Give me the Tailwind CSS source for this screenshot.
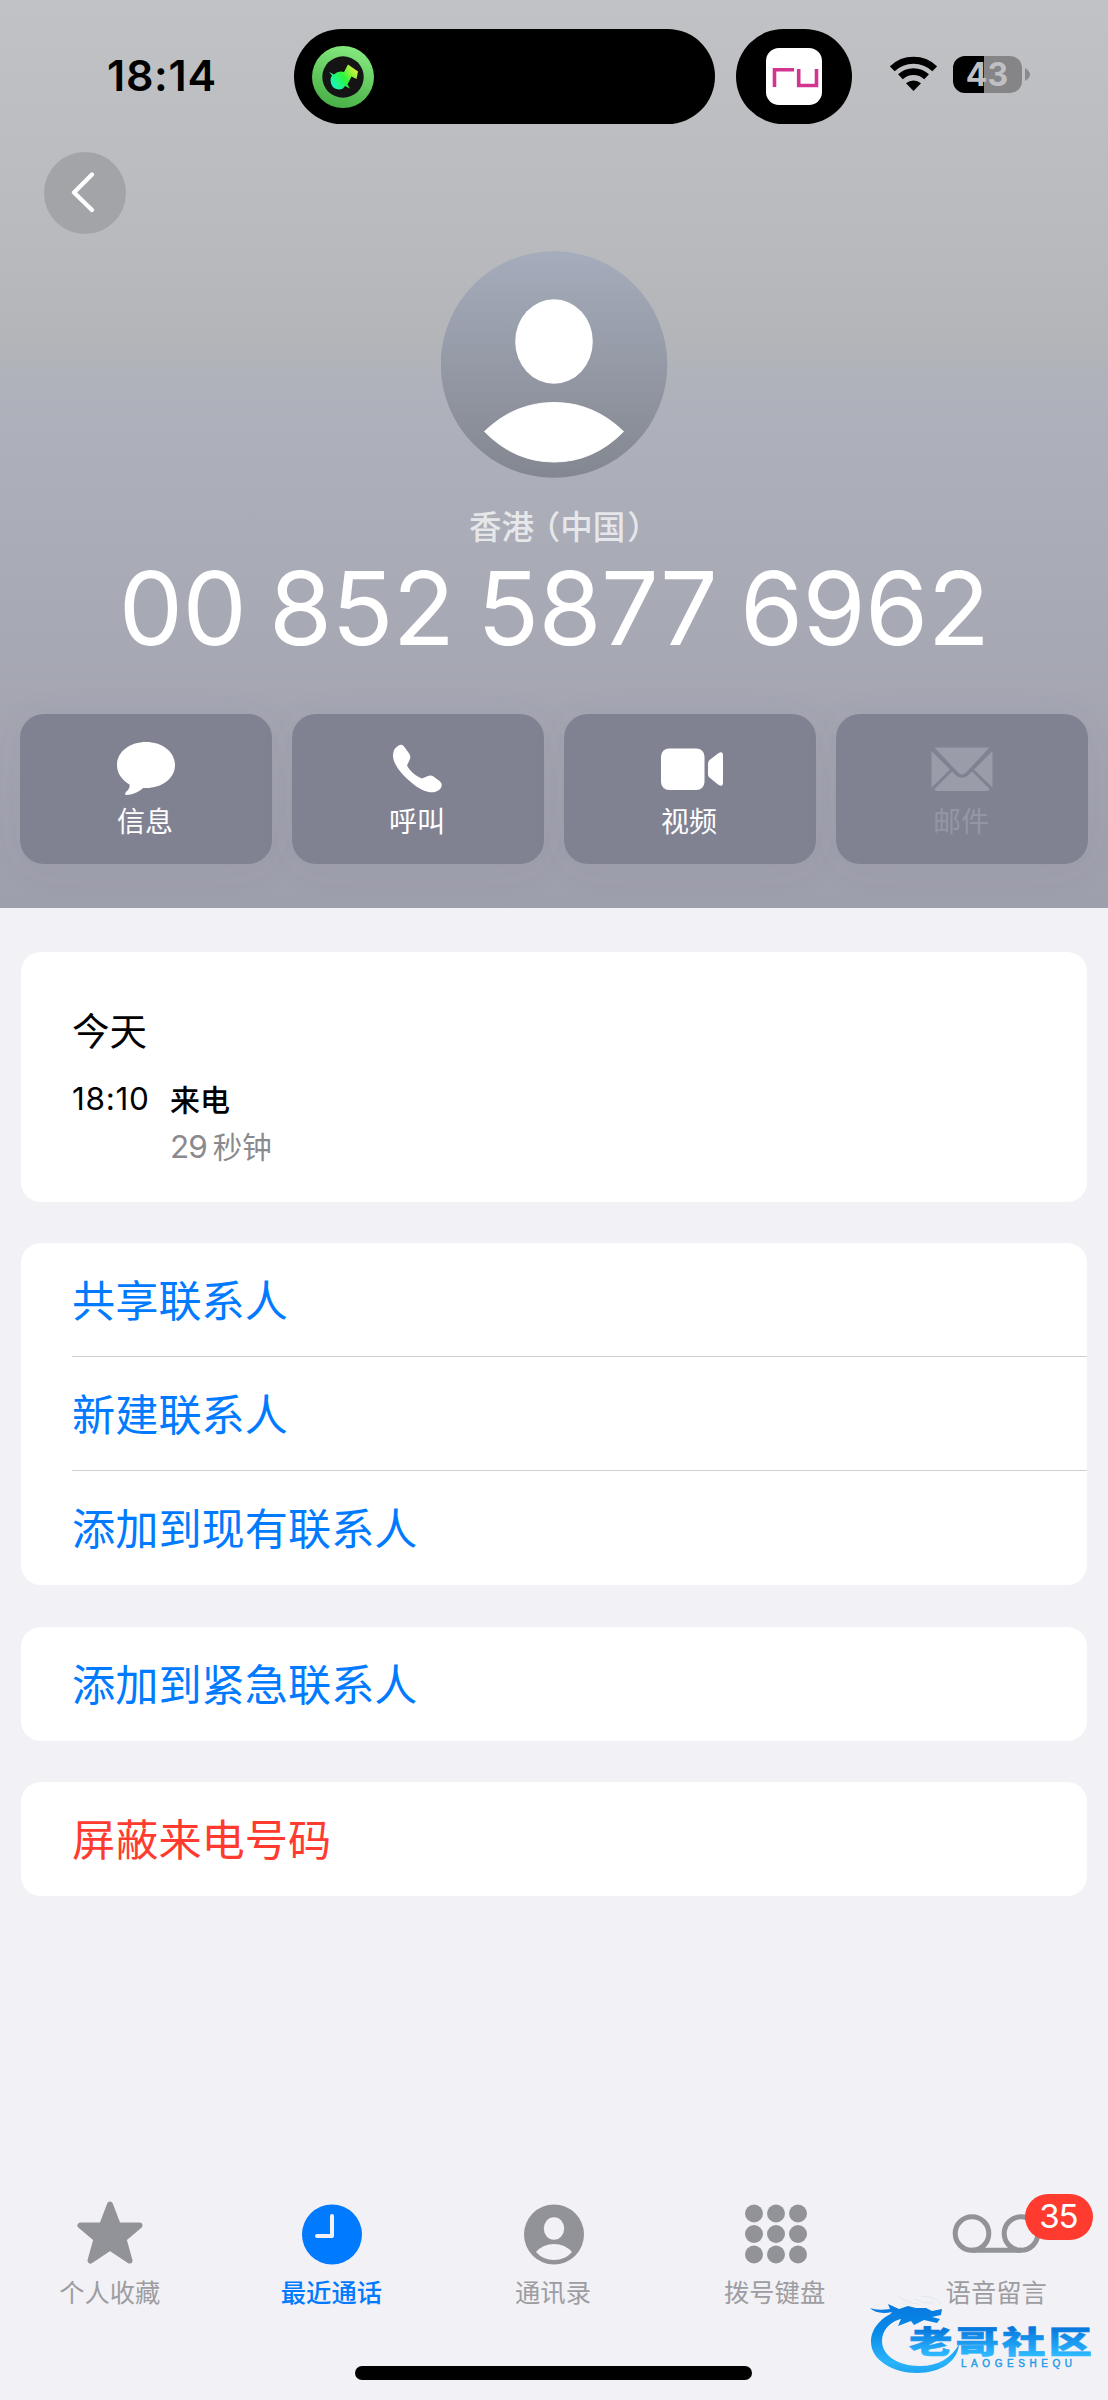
<!DOCTYPE html>
<html lang="zh-CN">
<head>
<meta charset="utf-8">
<title>通话详情</title>
<script src="https://cdn.jsdelivr.net/npm/@tailwindcss/browser@4"></script>
</head>
<body class="w-[1108px] h-[2400px] overflow-hidden bg-[#f2f1f6] flex flex-col font-['Inter','Noto_Sans_CJK_SC',sans-serif] whitespace-nowrap">
<header class="h-[908px] shrink-0 flex flex-col bg-[linear-gradient(180deg,#c1c2c6_0px,#b9babe_240px,#b4b5b9_340px,#afb2bb_385px,#a9abb6_560px,#9e9fac_908px)]">
  <!-- status bar -->
  <div class="h-[124px] pt-[29px] flex items-start">
    <div class="w-[294px] h-[95px] pl-[107px] flex items-center text-[43px] leading-none font-semibold tracking-[0.700px] text-black"><span class="-mt-[3px]">18:14</span></div>
    <div class="w-[421px] h-[95px] rounded-full bg-black flex items-center pl-[18px]">
      <svg width="62" height="62" viewBox="0 0 62 62">
        <defs>
          <linearGradient id="ring" x1=".7" y1="0" x2=".4" y2="1"><stop offset="0" stop-color="#86ea80"/><stop offset="1" stop-color="#48b046"/></linearGradient>
          <linearGradient id="note" gradientUnits="userSpaceOnUse" x1="19" y1="42" x2="46" y2="22"><stop offset="0" stop-color="#15f5d8"/><stop offset=".5" stop-color="#2cf53c"/><stop offset="1" stop-color="#fdf13a"/></linearGradient>
        </defs>
        <circle cx="31" cy="31" r="31" fill="url(#ring)"/><circle cx="31" cy="31" r="20.700" fill="#141414"/>
        <path d="M17 26L22 28.500Q26 24.500 32 26L36 18.500L46 25.500L44.500 33L39.500 30.500L35.500 38.500L38 42.500L33 40Q31 43.500 27 43.500Q19 43 18.500 34.500Q18.500 31.500 20 29.500z" fill="url(#note)"/>
      </svg>
    </div>
    <div class="ml-[21px] w-[116px] h-[95px] rounded-full bg-black flex items-center justify-center">
      <svg width="56" height="57" viewBox="0 0 56 57"><rect width="56" height="57" rx="13" fill="#fff"/><path d="M8.500 39V21.800H28M32.700 21V37.500H50.500V21" fill="none" stroke="#d23490" stroke-width="3.600"/></svg>
    </div>
    <svg class="ml-[38px] mt-[27px]" width="47" height="36" viewBox="0 0 47 36">
      <g fill="none" stroke="#000" stroke-width="6.800"><path d="M2.300 12.800A30.500 30.500 0 0 1 44.700 12.800"/><path d="M10.400 20.800A19 19 0 0 1 36.600 20.800"/></g>
      <path d="M23.500 35L16 27.200A11.500 11.500 0 0 1 31 27.200z"/>
    </svg>
    <div class="ml-[16px] mt-[27px] w-[69px] h-[37px] pr-[1px] rounded-[12px] bg-[linear-gradient(90deg,#000_31px,#858587_31px)] flex items-center justify-center text-[32px] leading-none font-bold text-[#bfc0c4]">43</div>
    <svg class="ml-[3px] mt-[39px]" width="5" height="13" viewBox="0 0 5 13"><path d="M0 0Q5 3 5 6.500T0 13z" fill="#8b8b8e"/></svg>
  </div>
  <!-- back button -->
  <div class="h-[127px] pl-[44px] pt-[28px]">
    <button class="size-[82px] rounded-full bg-[#a3a4a8] block">
      <svg width="82" height="82" viewBox="0 0 82 82"><path d="M48 22.500L30 40.500L48 58" fill="none" stroke="#fff" stroke-width="4.400" stroke-linecap="round" stroke-linejoin="round"/></svg>
    </button>
  </div>
  <svg class="mx-auto block shrink-0" width="227" height="227" viewBox="0 0 227 227">
    <defs><linearGradient id="av" x1="0" y1="0" x2="0" y2="1"><stop offset="0" stop-color="#a5acbb"/><stop offset="1" stop-color="#838790"/></linearGradient></defs>
    <circle cx="113" cy="113.500" r="113.300" fill="url(#av)"/>
    <ellipse cx="113" cy="90.500" rx="38.800" ry="42.300" fill="#fff"/>
    <path d="M43.500 180.500Q73.500 151.500 113 151.500T182.500 180.500Q152.500 211 113 211T43.500 180.500z" fill="#fff" stroke="#fff" stroke-linejoin="round"/>
  </svg>
  <div class="h-[62px] mt-[19px] pl-[469px] leading-[62px] text-[32.500px] font-medium text-[#e6e7ea]">香港<span class="ml-[10px] [font-feature-settings:'halt']">（</span>中国<span class="ml-[2px] [font-feature-settings:'halt']">）</span></div>
  <div class="h-[100px] mt-[-1px] flex items-center justify-center text-[102px] leading-none font-normal tracking-[-0.700px] [word-spacing:-5px] text-white">00 852 5877 6962</div>
  <div class="mt-[56px] px-5 grid grid-cols-4 gap-5 text-white text-[28px] leading-[40px]">
    <div class="h-[150px] rounded-[24px] bg-[#808292] shadow-[0_4px_40px_rgba(90,92,110,0.06)] flex flex-col items-center pt-[24px]">
      <svg width="64" height="62" viewBox="0 0 64 62"><path d="M32 4C48 4 61 13.500 61 27S48 50 32 50L29 50C25 54 18 57 12.500 57C10 57 11 55 13 53C15 51 16 49 15.500 46.500C8 42 3 35.500 3 27C3 13.500 16 4 32 4z" fill="#fff"/></svg>
      <span class="mt-[2px] -ml-[2px]">信息</span>
    </div>
    <div class="h-[150px] rounded-[24px] bg-[#808292] shadow-[0_4px_40px_rgba(90,92,110,0.06)] flex flex-col items-center pt-[24px]">
      <svg width="64" height="62" viewBox="0 0 64 62"><path d="M11 9.500C14 6.500 17 5.500 19 8.500L24.500 16Q25.800 19 25 21L22 27.500C24 32 31 38.500 37 40.500L43 38Q46 37 48.500 38.500L54.500 43C58 46 57 49.500 54 52C48 56.500 39 54 30 47.500C19 39 8.500 28 8 18C8 14 9 11.500 11 9.500z" fill="#fff" transform="translate(-1 0)"/></svg>
      <span class="mt-[2px] -ml-[2px]">呼叫</span>
    </div>
    <div class="h-[150px] rounded-[24px] bg-[#808292] shadow-[0_4px_40px_rgba(90,92,110,0.06)] flex flex-col items-center pt-[24px]">
      <svg class="ml-[3px]" width="64" height="62" viewBox="0 0 64 62"><rect x="1" y="10.500" width="43.500" height="41.500" rx="8" fill="#fff"/><path d="M48 25.500Q48 23.500 49.500 22L58 15.500Q63 12.500 63 17V45Q63 49.500 58 46.500L49.500 39.500Q48 38.500 48 36.500z" fill="#fff"/></svg>
      <span class="mt-[2px] -ml-[2px]">视频</span>
    </div>
    <div class="h-[150px] rounded-[24px] bg-[#808292] shadow-[0_4px_40px_rgba(90,92,110,0.06)] flex flex-col items-center pt-[24px] text-[#9596a3]">
      <svg width="64" height="62" viewBox="0 0 64 62"><path d="M4.500 9.500H59.500L36 34.500Q32 38.500 28 34.500zM1.500 13L20 31.500L1.500 49.500zM62.500 13V49.500L44 31.500zM22 33.500L26 37.500Q32 42 38 37.500L42 33.500L59.500 51Q59 53 57 53H7Q5 53 4.500 51z" fill="#9b9ca9"/></svg>
      <span class="mt-[2px] -ml-[2px]">邮件</span>
    </div>
  </div>
</header>
<main class="h-[1273px] shrink-0 pt-[44px] pl-[21px] pr-[21px] flex flex-col text-[43.200px]">
  <section class="h-[250px] rounded-[20px] bg-white pl-[51px] pt-[52px] text-black">
    <h2 class="text-[37.500px] leading-[56px]">今天</h2>
    <div class="flex mt-[17px] text-[30px] leading-[44px]">
      <span class="w-[98px] text-[31.500px] tracking-[0.700px]">18:10</span>
      <div class="flex flex-col">
        <span class="font-medium mt-[1px]">来电</span>
        <span class="mt-[3px] text-[#8a8a8e] leading-[44px]"><span class="text-[31.500px] tracking-[-1px]">29</span><span class="ml-[6px] text-[29.500px]">秒钟</span></span>
      </div>
    </div>
  </section>
  <section class="mt-[41px] h-[342px] rounded-[20px] bg-white pl-[51px] text-[#007aff]">
    <div class="h-[114px] pt-[3px] flex items-center border-b border-[#d0d0d3]">共享联系人</div>
    <div class="h-[114px] pt-[3px] flex items-center border-b border-[#d0d0d3]">新建联系人</div>
    <div class="h-[114px] pt-[3px] flex items-center">添加到现有联系人</div>
  </section>
  <section class="mt-[42px] h-[114px] pt-[2px] rounded-[20px] bg-white pl-[51px] flex items-center text-[#007aff]">添加到紧急联系人</section>
  <section class="mt-[41px] h-[114px] pt-[2px] rounded-[20px] bg-white pl-[51px] flex items-center text-[#ff3b30]">屏蔽来电号码</section>
</main>
<nav class="relative h-[219px] shrink-0 pt-[13px]">
  <div class="grid grid-cols-5 text-[25.300px] leading-[36px] text-[#9d9da1]">
    <div class="flex flex-col items-center">
      <svg class="-ml-[1px]" width="80" height="80" viewBox="0 0 80 80"><path d="M40 10.500L48 31.500H69.500L53.500 45L59.500 66.500L40 53.500L20.500 66.500L26.500 45L10.500 31.500H32z" fill="#929398" stroke="#929398" stroke-width="6" stroke-linejoin="round"/></svg>
      <span class="mt-[1px] -ml-[2px]">个人收藏</span>
    </div>
    <div class="flex flex-col items-center text-[#007aff]">
      <svg width="80" height="80" viewBox="0 0 80 80"><circle cx="40" cy="40.500" r="30" fill="#007aff"/><path d="M40 22V42H25" fill="none" stroke="#f2f1f6" stroke-width="4" stroke-linecap="round" stroke-linejoin="round"/></svg>
      <span class="mt-[1px] -ml-[2px] font-medium">最近通话</span>
    </div>
    <div class="flex flex-col items-center">
      <svg width="80" height="80" viewBox="0 0 80 80"><circle cx="40" cy="40.500" r="30" fill="#929398"/><ellipse cx="40" cy="34.500" rx="10.200" ry="11.300" fill="#f2f1f6"/><path d="M22 58Q29 50 40 50T58 58Q51 66 40 66T22 58z" fill="#f2f1f6"/></svg>
      <span class="mt-[1px] -ml-[2px]">通讯录</span>
    </div>
    <div class="flex flex-col items-center">
      <svg width="80" height="80" viewBox="0 0 80 80" fill="#929398"><circle cx="18" cy="19.500" r="9"/><circle cx="40" cy="19.500" r="9"/><circle cx="62" cy="19.500" r="9"/><circle cx="18" cy="40" r="9"/><circle cx="40" cy="40" r="9"/><circle cx="62" cy="40" r="9"/><circle cx="18" cy="60.500" r="9"/><circle cx="40" cy="60.500" r="9"/><circle cx="62" cy="60.500" r="9"/></svg>
      <span class="mt-[1px] -ml-[2px]">拨号键盘</span>
    </div>
    <div class="flex flex-col items-center relative">
      <svg width="96" height="80" viewBox="0 0 96 80" fill="none" stroke="#929398" stroke-width="5"><circle cx="23" cy="39.500" r="16.800"/><circle cx="72" cy="39.500" r="16.800"/><path d="M23 56.300H72"/></svg>
      <span class="mt-[1px] -ml-[2px]">语音留言</span>
      <span class="absolute left-[139px] top-0 w-[68px] h-[46px] pr-[2px] rounded-full bg-[#ff3b30] text-white text-[33px] leading-[45px] text-center tracking-[-1px]">35</span>
    </div>
  </div>
  <div class="absolute left-[355px] top-[185px] w-[397px] h-[14px] rounded-full bg-black"></div>
  <!-- community mark -->
  <svg class="absolute left-[866px] top-[112px]" width="234" height="86" viewBox="866 2293 234 86">
    <defs><linearGradient id="wm" gradientUnits="userSpaceOnUse" x1="0" y1="2305" x2="0" y2="2372"><stop offset="0" stop-color="#0879e0"/><stop offset=".4" stop-color="#078ae8"/><stop offset=".85" stop-color="#2ab4fb"/><stop offset="1" stop-color="#1fa5f2"/></linearGradient>
    <linearGradient id="wt" x1="0" y1="0" x2="0" y2="1"><stop offset=".25" stop-color="#0576dc"/><stop offset=".85" stop-color="#2db8ff"/></linearGradient></defs>
    <path d="M898 2311C882 2316 871 2328 871 2342C871 2360 893 2373 917 2373C941 2373 958 2361 959 2344C952 2358 938 2366 920 2366C897 2366 882 2355 882 2341C882 2330 890 2321 904 2318z" fill="url(#wm)"/>
    <path d="M870 2308Q877 2311 890 2309L888 2304L899 2309L908 2306L916 2308L926 2308L932 2311L942 2309L941 2315L932 2317L940 2319L937 2323L924 2320L914 2325L911 2321L898 2326L901 2319L888 2317L892 2312Q877 2315 870 2308z" fill="url(#wm)"/>
    <path d="M899 2297Q909 2304 920 2304M914 2299Q924 2304 934 2303M921 2296Q938 2297 941 2304" fill="none" stroke="#dfe8f3" stroke-width="1"/>
    <text transform="translate(909 2352.500) scale(1.400 1)" font-family="Noto Sans CJK SC" font-weight="900" font-size="31" letter-spacing="2.200" fill="url(#wt)" stroke="url(#wt)" stroke-width=".6">老哥社区</text>
    <text x="961" y="2366.500" font-family="Liberation Sans" font-size="10" textLength="111" fill="#219be8" stroke="#219be8" stroke-width=".4">LAOGESHEQU</text>
  </svg>
</nav>
</body>
</html>
